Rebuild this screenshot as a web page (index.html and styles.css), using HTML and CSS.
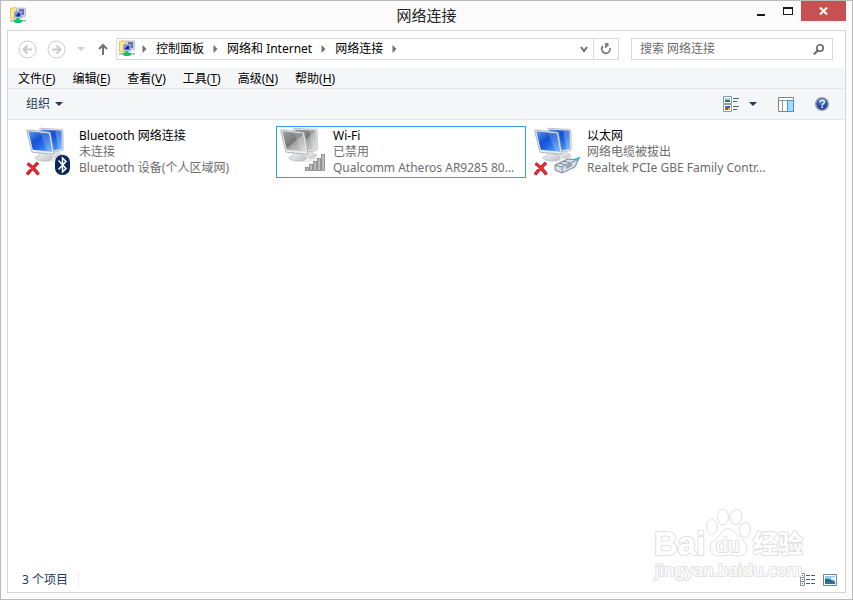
FILE: index.html
```html
<!DOCTYPE html>
<html lang="zh-CN">
<head>
    <meta charset="UTF-8">
    <meta name="viewport" content="width=device-width, initial-scale=1.0">
    <title>网络连接</title>
    <link rel="stylesheet" href="styles.css">
</head>
<body>
    <!-- shared icons -->
    <svg class="sprite" aria-hidden="true">
        <defs>
            <linearGradient id="blueScreen" x1="0" y1="0" x2="1" y2="1">
                <stop offset="0" stop-color="#5a9cf0"/>
                <stop offset="0.4" stop-color="#1450d2"/>
                <stop offset="0.6" stop-color="#2268e4"/>
                <stop offset="1" stop-color="#5eb0ff"/>
            </linearGradient>
            <linearGradient id="grayScreen" x1="0" y1="0" x2="1" y2="1">
                <stop offset="0" stop-color="#a2a2a2"/>
                <stop offset="0.48" stop-color="#767676"/>
                <stop offset="0.54" stop-color="#a4a4a4"/>
                <stop offset="1" stop-color="#d8d8d8"/>
            </linearGradient>
            <linearGradient id="metal" x1="0" y1="0" x2="1" y2="1">
                <stop offset="0" stop-color="#fafafa"/>
                <stop offset="1" stop-color="#bcc0c4"/>
            </linearGradient>
            <linearGradient id="barFill" x1="0" y1="0" x2="1" y2="0">
                <stop offset="0" stop-color="#8a8a8a"/>
                <stop offset="0.5" stop-color="#d0d0d0"/>
                <stop offset="1" stop-color="#a0a0a0"/>
            </linearGradient>
            <radialGradient id="helpFill" cx="0.5" cy="0.3" r="0.7">
                <stop offset="0" stop-color="#4d83e0"/>
                <stop offset="1" stop-color="#102d90"/>
            </radialGradient>
        </defs>
        <symbol id="net-folder" viewBox="0 0 16 16">
            <path d="M0.5 1.5l5-1 1 1v11l-6-1z" fill="#fbe78f" stroke="#dfc45a"/>
            <path d="M6.500 1h9v8l-1 1H7z" fill="#d3d6dd" stroke="#b4b8c2" stroke-width="0.8"/>
            <path d="M9 2h5v6H9z" fill="#6474b8"/>
            <path d="M4.500 4.500h7v6.500h-7z" fill="#e4e9f4" stroke="#8e99b4" stroke-width="0.8"/>
            <path d="M5.500 5.500h5v4.200h-5z" fill="#1728a8"/>
            <path d="M6 5.500h2.500L6 8.500z" fill="#7d9df0"/>
            <path d="M0 13h16v2H0z" fill="#c8d2cf"/>
            <path d="M6.500 11h3v2H12v2l-2 1H6l-2-1v-2h2.500z" fill="#0fc26b"/>
            <path d="M0 13.500h4M12 13.500h4" stroke="#a5bdb4"/>
        </symbol>
        <symbol id="pc-pair" viewBox="0 0 48 48">
            <ellipse cx="23" cy="31" rx="15" ry="4" fill="#000" opacity="0.07"/>
            <path d="M27 23l6 0 1 3 4 2-6 4-8-2z" fill="url(#metal)"/>
            <path d="M13.500 2q0-.8 1-.8L36 2.500q1 .1 1 1l.3 18.500q0 1.300-1.200 1.500L27 25z" fill="#e6e8ea" stroke="#a8adb3" stroke-width="0.700"/>
            <path class="screen" d="M15 2.500l20.500 1.200.3 18-8.500 1.800z"/>
            <path d="M29 3.400l6.500.4.2 17.500-3.200.8z" fill="#fff" opacity="0.22"/>
            <path d="M13 25l8 1 1 2 4 2q1 3-5 4-9 .5-12-3 0-1.500 4-2z" fill="url(#metal)" stroke="#b4b8bc" stroke-width="0.600"/>
            <path d="M0.800 4q-.2-1.200 1-1.100L23 5.200q1.200.1 1.400 1.300L28 26q.2 1.400-1 1.300L7 25.300Q5.800 25.200 5.500 24z" fill="#eceef0" stroke="#a0a5ab" stroke-width="0.800"/>
            <path class="screen" d="M2.300 4.300l20.700 2.200 3.300 18.200L6.800 22.800z"/>
            <path d="M14 5.600l9 .9 3.300 18-5.300-.5z" fill="#fff" opacity="0.18"/>
        </symbol>
        <symbol id="red-x" viewBox="0 0 14 14">
            <path d="M1.500 1.500Q5 4 7 6q2.500-3 5-5.200M1 12.500Q4 8.500 7 6q3 3 5.500 6.500" fill="none" stroke="#a5101c" stroke-width="3.200"/>
            <path d="M1.500 1.500Q5 4 7 6q2.500-3 5-5.200M1 12.500Q4 8.500 7 6q3 3 5.500 6.500" fill="none" stroke="#ee2c35" stroke-width="2"/>
        </symbol>
        <symbol id="crumb-arrow" viewBox="0 0 5 8">
            <path d="M0.500 0l4 4-4 4z" fill="#707070"/>
        </symbol>
    </svg>

    <div class="window">
        <header class="titlebar">
            <svg class="title-icon"><use href="#net-folder"/></svg>
            <h1>网络连接</h1>
            <div class="window-buttons">
                <button class="win-btn" aria-label="最小化">
                    <svg width="9" height="9"><path d="M1 7h8v2H1z" fill="#1a1a1a"/></svg>
                </button>
                <button class="win-btn" aria-label="最大化">
                    <svg width="10" height="8"><path d="M0 0h10v8H0zM1 2v5h8V2z" fill="#1a1a1a" fill-rule="evenodd"/></svg>
                </button>
                <button class="win-btn close-btn" aria-label="关闭">
                    <svg width="9" height="8"><path d="M1 0.500l7 7M8 0.500l-7 7" stroke="#fff" stroke-width="2"/></svg>
                </button>
            </div>
        </header>

        <main class="client">
            <div class="navbar">
                <button class="nav-btn" aria-label="后退">
                    <svg width="19" height="19"><circle cx="9.500" cy="9.500" r="8.500"/><path d="M14 9.500H6M9.500 5.500l-4 4 4 4" stroke-width="2"/></svg>
                </button>
                <button class="nav-btn" aria-label="前进">
                    <svg width="19" height="19"><circle cx="9.500" cy="9.500" r="8.500"/><path d="M5 9.500h8M9.500 5.500l4 4-4 4" stroke-width="2"/></svg>
                </button>
                <button class="recent-btn" aria-label="最近位置">
                    <svg width="8" height="4"><path d="M0 0h8L4 4z" fill="#d0d0d0"/></svg>
                </button>
                <button class="up-btn" aria-label="上移">
                    <svg width="10" height="12"><path d="M5 12V2M1 6l4-4 4 4" fill="none" stroke="#707070" stroke-width="2"/></svg>
                </button>
                <div class="address">
                    <svg class="address-icon"><use href="#net-folder"/></svg>
                    <nav class="crumbs">
                        <svg class="crumb-arrow"><use href="#crumb-arrow"/></svg>
                        <a href="#">控制面板</a>
                        <svg class="crumb-arrow"><use href="#crumb-arrow"/></svg>
                        <a href="#">网络和 Internet</a>
                        <svg class="crumb-arrow"><use href="#crumb-arrow"/></svg>
                        <a href="#">网络连接</a>
                        <svg class="crumb-arrow"><use href="#crumb-arrow"/></svg>
                    </nav>
                    <button class="history-btn" aria-label="历史记录">
                        <svg width="8" height="7"><path d="M1 1l3 4 3-4" fill="none" stroke="#707070" stroke-width="2"/></svg>
                    </button>
                    <button class="refresh-btn" aria-label="刷新">
                        <svg width="12" height="12"><path d="M3 3A4.200 4.200 0 1 0 10 5" fill="none" stroke="#808080" stroke-width="1.800"/><path d="M5 0v5h1l3-3-1-2z" fill="#808080"/></svg>
                    </button>
                </div>
                <div class="search">
                    <input type="text" aria-label="搜索" placeholder="搜索 网络连接">
                    <svg width="11" height="11"><circle cx="7" cy="4" r="3.200" fill="none" stroke="#666" stroke-width="1.600"/><path d="M5 6.200L0.800 10.400" stroke="#666" stroke-width="2"/></svg>
                </div>
            </div>

            <div class="menubar">
                <button>文件(<u>F</u>)</button>
                <button>编辑(<u>E</u>)</button>
                <button>查看(<u>V</u>)</button>
                <button>工具(<u>T</u>)</button>
                <button>高级(<u>N</u>)</button>
                <button>帮助(<u>H</u>)</button>
            </div>

            <div class="toolbar">
                <button class="organize">组织
                    <svg width="8" height="4"><path d="M0 0h8L4 4z" fill="#1e395b"/></svg>
                </button>
                <div class="toolbar-right">
                    <button aria-label="更改视图">
                        <svg width="16" height="16">
                            <path d="M0.500 0.500h8v7h-8zM0.500 8.500h8v7h-8z" fill="#fff" stroke="#8b98aa"/>
                            <path d="M2 2h5v2H2z" fill="#9fd4f4"/><path d="M2 4h5v2H2z" fill="#26736e"/>
                            <path d="M2 10h2v2H2z" fill="#3b8b46"/><path d="M4 10h3v2H4z" fill="#2857c2"/>
                            <path d="M2 12h3v2H2z" fill="#d2452c"/><path d="M5 12h2v2H5z" fill="#e7b52e"/>
                            <path d="M10 2.500h6M10 5.500h4M10 10.500h6M10 13.500h4" stroke="#4a607d"/>
                        </svg>
                    </button>
                    <button class="view-arrow" aria-label="更多选项">
                        <svg width="8" height="4"><path d="M0 0h8L4 4z" fill="#1e395b"/></svg>
                    </button>
                    <button class="pane-btn" aria-label="显示预览窗格">
                        <svg width="16" height="15">
                            <path d="M0.500 0.500h15v14h-15z" fill="#fff" stroke="#858585"/>
                            <path d="M0 3.500h16M4.500 3v12" stroke="#909090"/>
                            <path d="M9.500 3.500h6v11h-6z" fill="#a9d8fb" stroke="#3f95dd"/>
                        </svg>
                    </button>
                    <button aria-label="获取帮助">
                        <svg width="14" height="14">
                            <circle cx="7" cy="7" r="6.200" fill="url(#helpFill)" stroke="#9298a3" stroke-width="1.500"/>
                            <path d="M4.800 5.400C4.900 3.800 6 3.200 7.200 3.200c1.400 0 2.300.8 2.300 1.900C9.500 6.700 7.200 6.700 7.200 8.400" fill="none" stroke="#fff" stroke-width="1.400"/>
                            <path d="M6.400 9.400h1.600v1.500H6.400z" fill="#fff"/>
                        </svg>
                    </button>
                </div>
            </div>

            <div class="connections">
                <article class="connection">
                    <svg class="conn-icon" viewBox="0 0 48 50">
                        <use href="#pc-pair" width="48" height="48"/>
                        <use href="#red-x" y="35" width="14" height="14"/>
                        <rect x="29" y="28" width="15" height="20" rx="7" fill="#06285a"/>
                        <path d="M32.500 33.500l7.500 8-3.500 3.500V31l3.500 3.500-7.500 8" fill="none" stroke="#fff" stroke-width="1.500"/>
                    </svg>
                    <div class="conn-text">
                        <h2>Bluetooth 网络连接</h2>
                        <p>未连接</p>
                        <p>Bluetooth 设备(个人区域网)</p>
                    </div>
                </article>
                <article class="connection selected">
                    <svg class="conn-icon disabled" viewBox="0 0 48 50">
                        <use href="#pc-pair" width="48" height="48"/>
                        <g fill="url(#barFill)" stroke="#858585" stroke-width="0.800">
                            <rect x="25.500" y="40.500" width="3" height="3"/>
                            <rect x="29.500" y="37.500" width="3" height="6"/>
                            <rect x="33.500" y="34.500" width="3" height="9"/>
                            <rect x="37.500" y="31.500" width="3" height="12"/>
                            <rect x="41.500" y="27.500" width="3" height="16"/>
                        </g>
                    </svg>
                    <div class="conn-text">
                        <h2>Wi-Fi</h2>
                        <p>已禁用</p>
                        <p>Qualcomm Atheros AR9285 80...</p>
                    </div>
                </article>
                <article class="connection">
                    <svg class="conn-icon" viewBox="0 0 48 50">
                        <use href="#pc-pair" width="48" height="48"/>
                        <use href="#red-x" y="35" width="14" height="14"/>
                        <path d="M36 34l10-4-3 5-6 3z" fill="#45b5e5" stroke="#258db8" stroke-width="0.600"/>
                        <path d="M21 38l13-6 10 1-3 7-13 6-7-3z" fill="#d8e0e6" stroke="#687b8b" stroke-width="0.900"/>
                        <path d="M21 38l7 2v6M28 40l13-6M25 36l7 2M29 34l7 2" fill="none" stroke="#7c8c99"/>
                        <path d="M32 39l6-3v3l-6 3z" fill="#8fa5b5"/>
                        <path d="M38 33l7-2-2 3z" fill="#45b5e5"/>
                    </svg>
                    <div class="conn-text">
                        <h2>以太网</h2>
                        <p>网络电缆被拔出</p>
                        <p>Realtek PCIe GBE Family Contr...</p>
                    </div>
                </article>
            </div>

            <footer class="statusbar">
                <span class="item-count">3 个项目</span>
                <div class="view-switch">
                    <button aria-label="详细信息">
                        <svg width="15" height="13">
                            <path d="M0.500 0.500h4v12h-4zM0.500 4.500h4M0.500 8.500h4" fill="#fff" stroke="#8490a5"/>
                            <path d="M2 2h1v1H2zM2 10h1v1H2z" fill="#356ab5"/><path d="M2 6h1v1H2z" fill="#d33"/>
                            <path d="M6 2.500h4M11 2.500h4M6 6.500h4M11 6.500h4M6 10.500h4M11 10.500h4" stroke="#4c5d78"/>
                        </svg>
                    </button>
                    <button aria-label="大图标">
                        <svg width="14" height="12">
                            <path d="M0.500 0.500h13v11h-13z" fill="#fff" stroke="#71809a"/>
                            <path d="M2 2h10v8H2z" fill="#8cccf5"/>
                            <path d="M2 5q5-1 10 3v2H2z" fill="#276b73"/><path d="M2 8q5-1 10 1v1H2z" fill="#2f6bb8"/>
                            <path d="M8 3h4v3H8z" fill="#d8f0fb"/>
                        </svg>
                    </button>
                </div>
            </footer>

            <svg class="watermark" viewBox="0 0 156 76" aria-hidden="true">
                <text class="wm-logo" x="2" y="48">Bai</text>
                <ellipse cx="60" cy="20" rx="5.500" ry="7.500"/>
                <ellipse cx="71" cy="10" rx="5.500" ry="8"/>
                <ellipse cx="84" cy="10" rx="5.800" ry="7.500" transform="rotate(12 84 10)"/>
                <ellipse cx="93" cy="23" rx="5.500" ry="7.500" transform="rotate(8 93 23)"/>
                <path d="M76 22c-5 0-7 4-9 7-4 4-9 6-9 12 0 5 4 8 9 8 4 0 6-1 9-1s6 1 10 1c5 0 9-3 9-8 0-6-5-8-9-12-3-4-5-7-10-7z"/>
                <text class="wm-du" x="64" y="45">du</text>
                <text class="wm-cjk" x="101" y="46">经验</text>
                <text class="wm-url" x="3" y="69">jingyan.baidu.com</text>
            </svg>
        </main>
    </div>
</body>
</html>
```

FILE: styles.css
```css
* {
    box-sizing: border-box;
}

body {
    margin: 0;
    font-family: "Noto Sans", "Noto Sans CJK SC", sans-serif;
    font-size: 12px;
    line-height: 16px;
    color: #000;
}

button {
    display: flex;
    align-items: center;
    justify-content: center;
    padding: 0;
    border: none;
    background: none;
    font: inherit;
    color: inherit;
}

svg {
    display: block;
    flex-shrink: 0;
}

.sprite {
    position: absolute;
    width: 0;
    height: 0;
}

.window {
    display: flex;
    flex-direction: column;
    min-height: 100vh;
    padding: 0 6px 6px;
    border: 1px solid #bababa;
    background: #fbfbfb;
}

/* title bar */
.titlebar {
    display: grid;
    grid-template-columns: 1fr auto 1fr;
    height: 29px;
}

.title-icon {
    width: 16px;
    height: 16px;
    margin: 6px 0 0 3px;
}

.titlebar h1 {
    margin: 0;
    padding-top: 4px;
    font-size: 15px;
    font-weight: normal;
    line-height: 20px;
    color: #222;
}

.window-buttons {
    display: flex;
    justify-content: flex-end;
}

.win-btn {
    width: 27px;
    height: 20px;
}

.close-btn {
    width: 45px;
    background: #c75050;
}

.client {
    position: relative;
    flex: 1;
    display: flex;
    flex-direction: column;
    border: 1px solid #d6d6d6;
    background: #fff;
}

/* navigation row */
.navbar {
    display: flex;
    align-items: center;
    height: 37px;
    padding: 0 12px 1px 10px;
}

.nav-btn {
    margin-right: 10px;
}

.nav-btn svg {
    fill: none;
    stroke: #cacaca;
}

.recent-btn {
    margin: 0 13px 0 1px;
}

.up-btn {
    margin-right: 8px;
}

.address {
    flex: 1;
    display: flex;
    align-items: center;
    height: 22px;
    border: 1px solid #d9d9d9;
}

.address-icon {
    width: 16px;
    height: 16px;
    margin: 0 7px 2px 2px;
}

.crumbs {
    flex: 1;
    display: flex;
    align-items: center;
    gap: 9px;
    white-space: nowrap;
}

.crumbs a {
    color: #000;
    text-decoration: none;
}

.crumb-arrow {
    width: 5px;
    height: 8px;
}

.history-btn {
    width: 18px;
    height: 20px;
}

.refresh-btn {
    width: 25px;
    height: 20px;
    border-left: 1px solid #d9d9d9;
}

.search {
    flex: 0 1 202px;
    display: flex;
    align-items: center;
    min-width: 0;
    height: 22px;
    margin-left: 12px;
    padding: 0 8px;
    border: 1px solid #d9d9d9;
}

.search input {
    flex: 1;
    min-width: 0;
    padding: 0;
    border: none;
    outline: none;
    background: none;
    font: inherit;
}

.search input::placeholder {
    color: #6d6d6d;
}

/* menus */
.menubar {
    display: flex;
    gap: 17px;
    height: 21px;
    padding: 2px 10px 0;
    border-bottom: 1px solid #e6e7e8;
    background: #f5f6f7;
}

.menubar u {
    text-underline-offset: 2px;
}

.toolbar {
    display: flex;
    align-items: center;
    justify-content: space-between;
    height: 31px;
    padding: 0 16px 0 18px;
    border-bottom: 1px solid #e8e9ea;
    background: #f5f6f7;
    color: #1e395b;
}

.organize {
    gap: 5px;
}

.toolbar-right {
    display: flex;
    align-items: center;
}

.view-arrow {
    margin: 0 21px 0 10px;
}

.pane-btn {
    margin-right: 21px;
}

/* connection list */
.connections {
    flex: 1;
    display: grid;
    grid-template-columns: repeat(auto-fill, 250px);
    align-content: start;
    gap: 4px;
    padding: 6px 14px;
}

.connection {
    display: flex;
    min-width: 0;
    padding-left: 3px;
    border: 1px solid transparent;
}

.connection.selected {
    border-color: #3399ff;
}

.conn-icon {
    width: 48px;
    height: 50px;
    fill: url(#blueScreen);
}

.conn-icon.disabled {
    fill: url(#grayScreen);
}

.conn-text {
    flex: 1;
    min-width: 0;
    padding: 1px 4px 0 5px;
}

.conn-text h2,
.conn-text p {
    margin: 0;
    font-size: 12px;
    font-weight: normal;
    white-space: nowrap;
}

.conn-text p {
    color: #6d6d6d;
}

/* status bar */
.statusbar {
    display: flex;
    align-items: center;
    justify-content: space-between;
    height: 25px;
    padding: 0 8px 0 14px;
    color: #1e395b;
}

.item-count {
    padding-right: 10px;
    border-right: 1px solid #f0f0f0;
}

.view-switch {
    display: flex;
    gap: 8px;
}

/* outlined logo over the list */
.watermark {
    position: absolute;
    right: 37px;
    bottom: 9px;
    width: 156px;
    height: 76px;
    overflow: visible;
    pointer-events: none;
    fill: #fff;
    stroke: #e0e0e0;
    stroke-width: 1px;
}

.watermark text {
    paint-order: stroke;
    stroke-width: 2px;
    stroke-linejoin: round;
}

.wm-logo {
    font: bold 33px "Liberation Sans", sans-serif;
}

.wm-du {
    font: 21px "Liberation Sans", sans-serif;
}

.wm-cjk {
    font: bold 25px "Noto Sans CJK SC", sans-serif;
}

.wm-url {
    font: 17px "Noto Sans", sans-serif;
}
```
